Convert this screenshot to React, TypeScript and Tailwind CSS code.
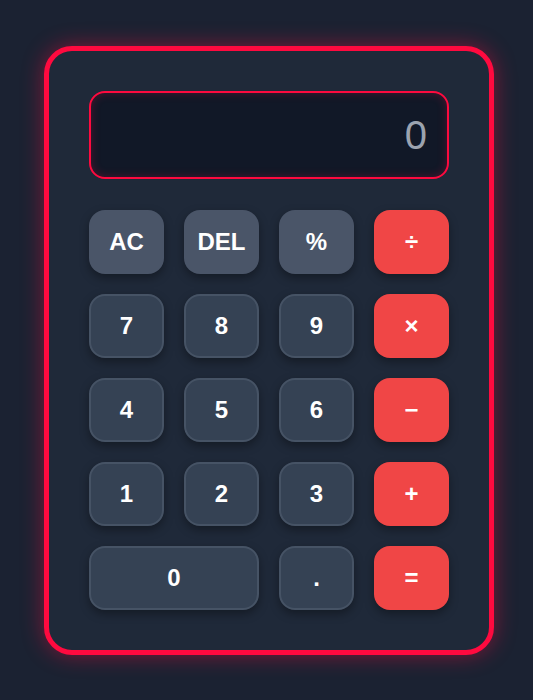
import React from "react";

const base =
  "h-16 rounded-2xl flex items-center justify-center text-2xl font-bold text-white shadow-[0_4px_10px_rgba(0,0,0,0.35)]";
const fn = base + " bg-[#4a5568]";
const num = base + " bg-[#354254] border-2 border-[#465365]";
const op = base + " bg-[#f04646]";

export default function App() {
  return (
    <div
      className="min-h-[700px] w-full bg-[#1b2232] flex justify-center pt-[46px] pl-[5px]"
      style={{ fontFamily: '"Liberation Sans", Arial, sans-serif' }}
    >
      <div className="w-[450px] h-[609px] rounded-[28px] border-[5px] border-[#ff0a3f] bg-[#1f2939] p-10 shadow-[0_0_22px_rgba(255,10,63,0.45)]">
        <div className="h-[88px] rounded-2xl border-2 border-[#ff0a3f] bg-[#111827] shadow-[inset_0_0_10px_rgba(255,10,63,0.25)] flex items-center justify-end pr-5 mb-[31px]">
          <span className="text-[40px] text-[#9ca3af] leading-none">0</span>
        </div>
        <div className="grid grid-cols-4 gap-5">
          <button className={fn}>AC</button>
          <button className={fn}>DEL</button>
          <button className={fn}>%</button>
          <button className={op}>÷</button>
          <button className={num}>7</button>
          <button className={num}>8</button>
          <button className={num}>9</button>
          <button className={op}>×</button>
          <button className={num}>4</button>
          <button className={num}>5</button>
          <button className={num}>6</button>
          <button className={op}>−</button>
          <button className={num}>1</button>
          <button className={num}>2</button>
          <button className={num}>3</button>
          <button className={op}>+</button>
          <button className={num + " col-span-2"}>0</button>
          <button className={num}>.</button>
          <button className={op}>=</button>
        </div>
      </div>
    </div>
  );
}
